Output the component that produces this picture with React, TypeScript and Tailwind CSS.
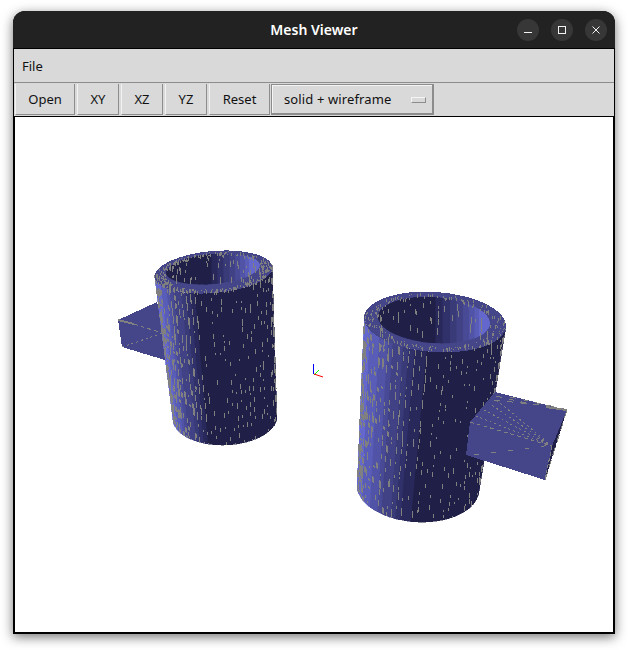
import { useMemo } from "react";

type Ell = { cx: number; cy: number; rx: number; ry: number; rot: number };

const BUTTONS = [
  { label: "Open", w: "w-[60px]" },
  { label: "XY", w: "w-[42px]" },
  { label: "XZ", w: "w-[42px]" },
  { label: "YZ", w: "w-[42px]" },
  { label: "Reset", w: "w-[61px]" },
];

const SHADES = ["#6468cc", "#5a5db8", "#5053a6", "#484a96", "#414286", "#393a78", "#30306a", "#28285a", "#1f1f48"];
const DARK = "#1f1f48";
const FLAT = "#45468a";
const WIRE = "#808080";

function pt(e: Ell, deg: number) {
  const a = (deg * Math.PI) / 180;
  const r = (e.rot * Math.PI) / 180;
  const x = e.rx * Math.cos(a);
  const y = e.ry * Math.sin(a);
  return [e.cx + x * Math.cos(r) - y * Math.sin(r), e.cy + x * Math.sin(r) + y * Math.cos(r)];
}

function rng(seed: number) {
  let s = seed;
  return () => {
    s = (s * 16807) % 2147483647;
    return s / 2147483647;
  };
}

function shade(t: number) {
  return SHADES[Math.min(SHADES.length - 1, Math.max(0, Math.floor(t * SHADES.length)))];
}

type CupProps = { top: Ell; inner: Ell; bottom: Ell; seed: number; darkAt: number; rimTicks: number };

function Cup({ top, inner, bottom, seed, darkAt, rimTicks }: CupProps) {
  const { strips, hole, dashes, ringDashes, sides } = useMemo(() => {
    const strips: { d: string; fill: string }[] = [];
    const hole: { d: string; fill: string }[] = [];
    const rand = rng(seed);
    let dashes = "";
    let ringDashes = "";
    const N = 36;
    for (let i = 0; i < N; i++) {
      const a0 = 180 - (i * 180) / N + (i === 0 ? 6 : 0);
      const a1 = 180 - ((i + 1) * 180) / N - (i === N - 1 ? 6 : 0);
      const p0 = pt(top, a0);
      const p1 = pt(top, a1);
      const q0 = pt(bottom, a0);
      const q1 = pt(bottom, a1);
      // shade by how far across the silhouette the facet sits
      const xf = (1 - Math.cos(((i + 0.5) * Math.PI) / N)) / 2;
      strips.push({
        d: `M${p0[0]} ${p0[1]}L${p1[0]} ${p1[1]}L${q1[0]} ${q1[1]}L${q0[0]} ${q0[1]}Z`,
        fill: shade(xf / darkAt),
      });
      // wireframe shows up as short grey ticks down each facet edge
      const rows = 24;
      const keep = xf < darkAt ? 0.6 : 0.32;
      for (let k = 0; k < rows; k++) {
        if (rand() > keep) continue;
        const v = (k + rand()) / rows;
        const x = Math.round(p0[0] + (q0[0] - p0[0]) * v);
        const y = Math.round(p0[1] + (q0[1] - p0[1]) * v);
        const len = 2 + Math.floor(rand() * (xf < darkAt ? 7 : 4));
        dashes += `M${x + 0.5} ${y}v${len}`;
        if (xf < 0.3 && rand() < 0.3) dashes += `M${x + 1.5} ${y + 1}v${len}`;
      }
    }
    // inside of the tube, seen through the top opening
    const M = 24;
    const lower = { ...inner, cy: inner.cy + inner.ry * 2 };
    for (let i = 0; i < M; i++) {
      const a0 = 180 + (i * 180) / M;
      const a1 = 180 + ((i + 1) * 180) / M;
      const p0 = pt(inner, a0);
      const p1 = pt(inner, a1);
      const q0 = pt(lower, a0);
      const q1 = pt(lower, a1);
      const xf = (1 - Math.cos(((i + 0.5) * Math.PI) / M)) / 2;
      hole.push({
        d: `M${p0[0]} ${p0[1]}L${p1[0]} ${p1[1]}L${q1[0]} ${q1[1]}L${q0[0]} ${q0[1]}Z`,
        fill: xf < 0.46 ? DARK : shade(1 - (xf - 0.46) / 0.5),
      });
      for (let k = 0; k < 4; k++) {
        if (rand() > 0.55) continue;
        const x = Math.round(p0[0] + rand() * 3);
        const y = Math.round(p0[1] + 2 + rand() * inner.ry * 1.5);
        ringDashes += `M${x + 0.5} ${y}v${2 + Math.floor(rand() * 6)}`;
      }
    }
    // ticks across the flat rim
    for (let i = 0; i < rimTicks; i++) {
      const a = rand() * 360;
      const f = 0.82 + rand() * 0.17;
      const p = pt({ ...top, rx: top.rx * f, ry: top.ry * (f - 0.03) }, a);
      ringDashes += `M${Math.round(p[0]) + 0.5} ${Math.round(p[1])}v${1 + Math.floor(rand() * 3)}`;
    }
    const tl = pt(top, 186);
    const bl = pt(bottom, 186);
    const tr = pt(top, -6);
    const br = pt(bottom, -6);
    const sides = `M${tl[0]} ${tl[1]}L${bl[0]} ${bl[1]}M${tr[0]} ${tr[1]}L${br[0]} ${br[1]}`;
    return { strips, hole, dashes, ringDashes, sides };
  }, [top, inner, bottom, seed, darkAt, rimTicks]);

  const holeId = `hole-${seed}`;
  const bodyId = `body-${seed}`;
  return (
    <g>
      {strips.map((s, i) => (
        <path key={i} d={s.d} fill={s.fill} stroke={s.fill} strokeWidth={0.5} />
      ))}
      <clipPath id={bodyId}>
        {strips.map((s, i) => (
          <path key={i} d={s.d} />
        ))}
      </clipPath>
      <g clipPath={`url(#${bodyId})`}>
        <path d={dashes} stroke={WIRE} fill="none" />
      </g>
      <path d={sides} stroke={WIRE} strokeWidth={1.5} strokeDasharray="7 6" fill="none" />
      <ellipse
        cx={top.cx}
        cy={top.cy}
        rx={top.rx}
        ry={top.ry}
        transform={`rotate(${top.rot} ${top.cx} ${top.cy})`}
        fill={FLAT}
      />
      <clipPath id={holeId}>
        <ellipse
          cx={inner.cx}
          cy={inner.cy}
          rx={inner.rx}
          ry={inner.ry}
          transform={`rotate(${inner.rot} ${inner.cx} ${inner.cy})`}
        />
      </clipPath>
      <g clipPath={`url(#${holeId})`}>
        {hole.map((s, i) => (
          <path key={i} d={s.d} fill={s.fill} stroke={s.fill} strokeWidth={0.5} />
        ))}
      </g>
      <path d={ringDashes} stroke={WIRE} fill="none" />
    </g>
  );
}

const LEFT = {
  top: { cx: 213.5, cy: 272, rx: 59, ry: 21, rot: -5 },
  inner: { cx: 213, cy: 269, rx: 47, ry: 15, rot: -5 },
  bottom: { cx: 225, cy: 418, rx: 52, ry: 27, rot: -2 },
};

const RIGHT = {
  top: { cx: 435, cy: 322, rx: 71, ry: 30, rot: 4 },
  inner: { cx: 434, cy: 320, rx: 56, ry: 23, rot: 4 },
  bottom: { cx: 418, cy: 488, rx: 61, ry: 34, rot: 3 },
};

function Scene() {
  return (
    <svg viewBox="15 117 598 515" className="block h-[515px] w-[598px]" shapeRendering="crispEdges">
      {/* left part: stub sits behind the tube */}
      <polygon points="118,320 157,302 170,340 165,360 122,347" fill={FLAT} />
      <path d="M118 320L134 324" stroke={WIRE} strokeWidth={2} fill="none" />
      <path d="M134 324L165 334" stroke={WIRE} strokeDasharray="4 3" fill="none" />
      <path d="M122 347L163 333" stroke={WIRE} strokeDasharray="2 3" fill="none" />
      <Cup {...LEFT} seed={4127} darkAt={0.36} rimTicks={320} />

      {/* right part */}
      <Cup {...RIGHT} seed={9181} darkAt={0.49} rimTicks={200} />
      <polygon points="495,392 567,410 552,446 470,422" fill={FLAT} />
      <polygon points="470,422 552,446 545,480 466,455" fill={FLAT} />
      <polygon points="567,410 552,446 545,480" fill={DARK} />
      <path d="M552 446L476 416M552 446L484 410M552 446L490 404M552 446L494 398" stroke={WIRE} strokeDasharray="2 3" fill="none" />
      <path d="M470 422L552 446" stroke={WIRE} strokeDasharray="4 3" fill="none" />
      <path d="M474 455L552 445" stroke={WIRE} strokeDasharray="5 12" fill="none" />
      <path d="M496 396L530 404M494 400L548 406M510 397L560 408" stroke={WIRE} strokeDasharray="6 7" fill="none" />
      <path d="M546 407L567 410" stroke={WIRE} strokeWidth={2} fill="none" />
      <path d="M567 410L545 480" stroke={WIRE} strokeDasharray="8 5" fill="none" />
      <path d="M552 446L545 480" stroke={WIRE} strokeDasharray="4 2" fill="none" />

      {/* origin axes */}
      <path d="M313.5 364V374" stroke="#0000ff" fill="none" />
      <path d="M314 375L319 370" stroke="#00ff00" fill="none" shapeRendering="auto" />
      <path d="M314 374L323 377" stroke="#ff0000" fill="none" shapeRendering="auto" />
    </svg>
  );
}

function WindowButton({ children }: { children: React.ReactNode }) {
  return (
    <div className="flex h-[22px] w-[22px] items-center justify-center rounded-full bg-[#373737]">
      <svg width="12" height="12" viewBox="0 0 12 12" fill="none" stroke="#f2f2f2" strokeWidth="1">
        {children}
      </svg>
    </div>
  );
}

export default function App() {
  return (
    <div className="h-[650px] w-[628px] overflow-hidden bg-white pl-[13px] pt-[11px] font-['Noto_Sans','Open_Sans',sans-serif]">
      <div className="flex h-[623px] w-[602px] flex-col overflow-hidden rounded-t-[12px] bg-black shadow-[0_3px_12px_rgba(0,0,0,0.55)]">
        {/* title bar */}
        <div className="relative flex h-[37px] shrink-0 items-center justify-center bg-[#222222]">
          <span className="text-[14px] font-semibold text-white">Mesh Viewer</span>
          <div className="absolute right-[8px] top-[8px] flex gap-[12px]">
            <WindowButton>
              <path d="M2 8.5H10" />
            </WindowButton>
            <WindowButton>
              <rect x="2.5" y="2.5" width="7" height="7" />
            </WindowButton>
            <WindowButton>
              <path d="M2.5 2.5L9.5 9.5M9.5 2.5L2.5 9.5" />
            </WindowButton>
          </div>
        </div>

        <div className="flex min-h-0 flex-1 flex-col pb-[2px] pl-[1px] pr-[1px] pt-[1px]">
          {/* menu bar */}
          <div className="flex h-[34px] shrink-0 items-center border-b border-[#8c8c8c] bg-[#d9d9d9] pl-[8px] pt-[2px] text-[13px] text-[#111111]">
            File
          </div>

          {/* toolbar */}
          <div className="flex h-[33px] shrink-0 items-start gap-[2px] bg-[#d9d9d9] pl-[1px] pt-[1px] text-[13px] text-[#111111]">
            {BUTTONS.map((b) => (
              <div
                key={b.label}
                className={`flex h-[31px] ${b.w} items-center justify-center border-b border-l border-r border-b-[#8c8c8c] border-l-[#f2f2f2] border-r-[#8c8c8c] bg-[#d9d9d9] pt-[2px]`}
              >
                {b.label}
              </div>
            ))}
            <div className="-ml-[1px] h-[31px] w-[163px] border border-b-2 border-r-2 border-[#8c8c8c]">
              <div className="flex h-full items-center justify-between border-l border-t border-l-[#f5f5f5] border-t-[#f5f5f5] bg-[#d9d9d9] pl-[11px] pr-[6px] pt-[1px]">
                <span className="tracking-[0.12px]">solid + wireframe</span>
                <div className="h-[6px] w-[15px] border border-b-[#8c8c8c] border-l-[#f5f5f5] border-r-[#8c8c8c] border-t-[#f5f5f5]" />
              </div>
            </div>
          </div>

          {/* viewport */}
          <div className="min-h-0 flex-1 border-x border-t border-black bg-white">
            <Scene />
          </div>
        </div>
      </div>
    </div>
  );
}
